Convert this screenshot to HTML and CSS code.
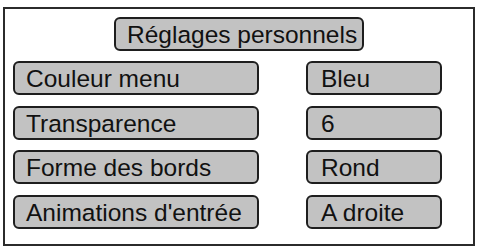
FILE: index.html
```html
<!DOCTYPE html>
<html lang="fr">
<head>
<meta charset="utf-8">
<title>Réglages personnels</title>
<link rel="stylesheet" href="styles.css">
</head>
<body>
<div class="panel">
  <div class="title">Réglages personnels</div>
  <div class="grid">
    <div class="field label">Couleur menu</div>
    <div class="field value">Bleu</div>
    <div class="field label">Transparence</div>
    <div class="field value">6</div>
    <div class="field label">Forme des bords</div>
    <div class="field value">Rond</div>
    <div class="field label">Animations d'entrée</div>
    <div class="field value">A droite</div>
  </div>
</div>
</body>
</html>
```
FILE: styles.css
```css
html, body {
  margin: 0;
  padding: 0;
  background: #ffffff;
}
body {
  font-family: "Liberation Sans", Arial, sans-serif;
  color: #111111;
}
.panel {
  box-sizing: border-box;
  margin: 7px 0 0 3px;
  width: 472px;
  height: 239px;
  border: 2px solid #2b2b2b;
  padding: 8px 0 0 8px;
  display: flex;
  flex-direction: column;
}
.title {
  box-sizing: border-box;
  align-self: center;
  margin-left: -8px;
  width: 250px;
  height: 34px;
  padding-left: 11px;
  border: 2px solid #1e1e1e;
  border-radius: 6px;
  background: #c2c2c2;
  font-size: 24.5px;
  line-height: 31px;
  white-space: nowrap;
}
.grid {
  margin-top: 10px;
  display: grid;
  grid-template-columns: 246px 136px;
  column-gap: 47px;
  row-gap: 10.5px;
}
.field {
  box-sizing: border-box;
  height: 34px;
  padding-left: 11px;
  border: 2px solid #1e1e1e;
  border-radius: 6px;
  background: #c2c2c2;
  font-size: 24.5px;
  line-height: 32.5px;
  white-space: nowrap;
}
.value {
  padding-left: 13px;
}
```
